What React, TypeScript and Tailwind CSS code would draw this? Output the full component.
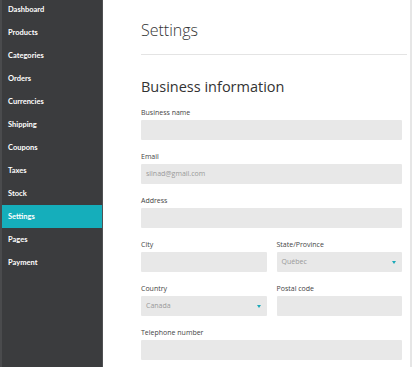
import React from 'react'

const navItems = [
  'Dashboard',
  'Products',
  'Categories',
  'Orders',
  'Currencies',
  'Shipping',
  'Coupons',
  'Taxes',
  'Stock',
  'Settings',
  'Pages',
  'Payment',
]

function Caret() {
  return (
    <svg width="4" height="3" viewBox="0 0 4 3" className="shrink-0">
      <path d="M0 0 L4 0 L2 3 Z" fill="#1aa9b8" />
    </svg>
  )
}

function Field({ label, value, select, className = '' }: { label: string; value?: string; select?: boolean; className?: string }) {
  return (
    <div className={className}>
      <div className="h-[13px] text-[7px] leading-[13px] text-[#444]">{label}</div>
      <div className="mt-[1px] h-[20px] bg-[#e8e8e8] rounded-[1px] flex items-center justify-between pl-[5px] pr-[6px] text-[7px] text-[#999]">
        <span>{value}</span>
        {select && <Caret />}
      </div>
    </div>
  )
}

export default function App() {
  return (
    <div className="flex h-[367px] w-[412px] bg-white overflow-hidden" style={{ fontFamily: 'Lato, "Open Sans", sans-serif' }}>
      <aside className="w-[103px] shrink-0 bg-[#3b3c3e] border-l-2 border-[#4a4b4d] border-r border-r-[#505153]">
        <nav className="flex flex-col">
          {navItems.map(item => (
            <div
              key={item}
              className={`h-[23px] flex items-center pl-[6px] text-[7.5px] font-bold text-white ${item === 'Settings' ? 'bg-[#15aebb]' : ''}`}
              style={{ marginTop: item === 'Dashboard' ? -2 : 0 }}
            >
              {item}
            </div>
          ))}
        </nav>
      </aside>

      <main className="flex-1 border-r-2 border-[#e6e6e6] pl-[38px] pr-[3px]" style={{ fontFamily: '"Open Sans", Lato, sans-serif' }}>
        <div className="h-[55px] border-b border-[#e4e4e4] flex items-center">
          <h1 className="text-[16px] font-light text-[#333] mt-[6px]">Settings</h1>
        </div>
        <div className="pr-[5px]">
          <h2 className="mt-[20px] h-[24px] text-[14.5px] text-[#333] leading-[24px]">Business information</h2>
          <div className="mt-[7px] flex flex-col gap-[10px]">
            <Field label="Business name" />
            <Field label="Email" value="silnad@gmail.com" />
            <Field label="Address" />
            <div className="grid grid-cols-2 gap-x-[10px]">
              <Field label="City" />
              <Field label="State/Province" value="Québec" select />
            </div>
            <div className="grid grid-cols-2 gap-x-[10px]">
              <Field label="Country" value="Canada" select />
              <Field label="Postal code" />
            </div>
            <Field label="Telephone number" />
          </div>
        </div>
      </main>
    </div>
  )
}
